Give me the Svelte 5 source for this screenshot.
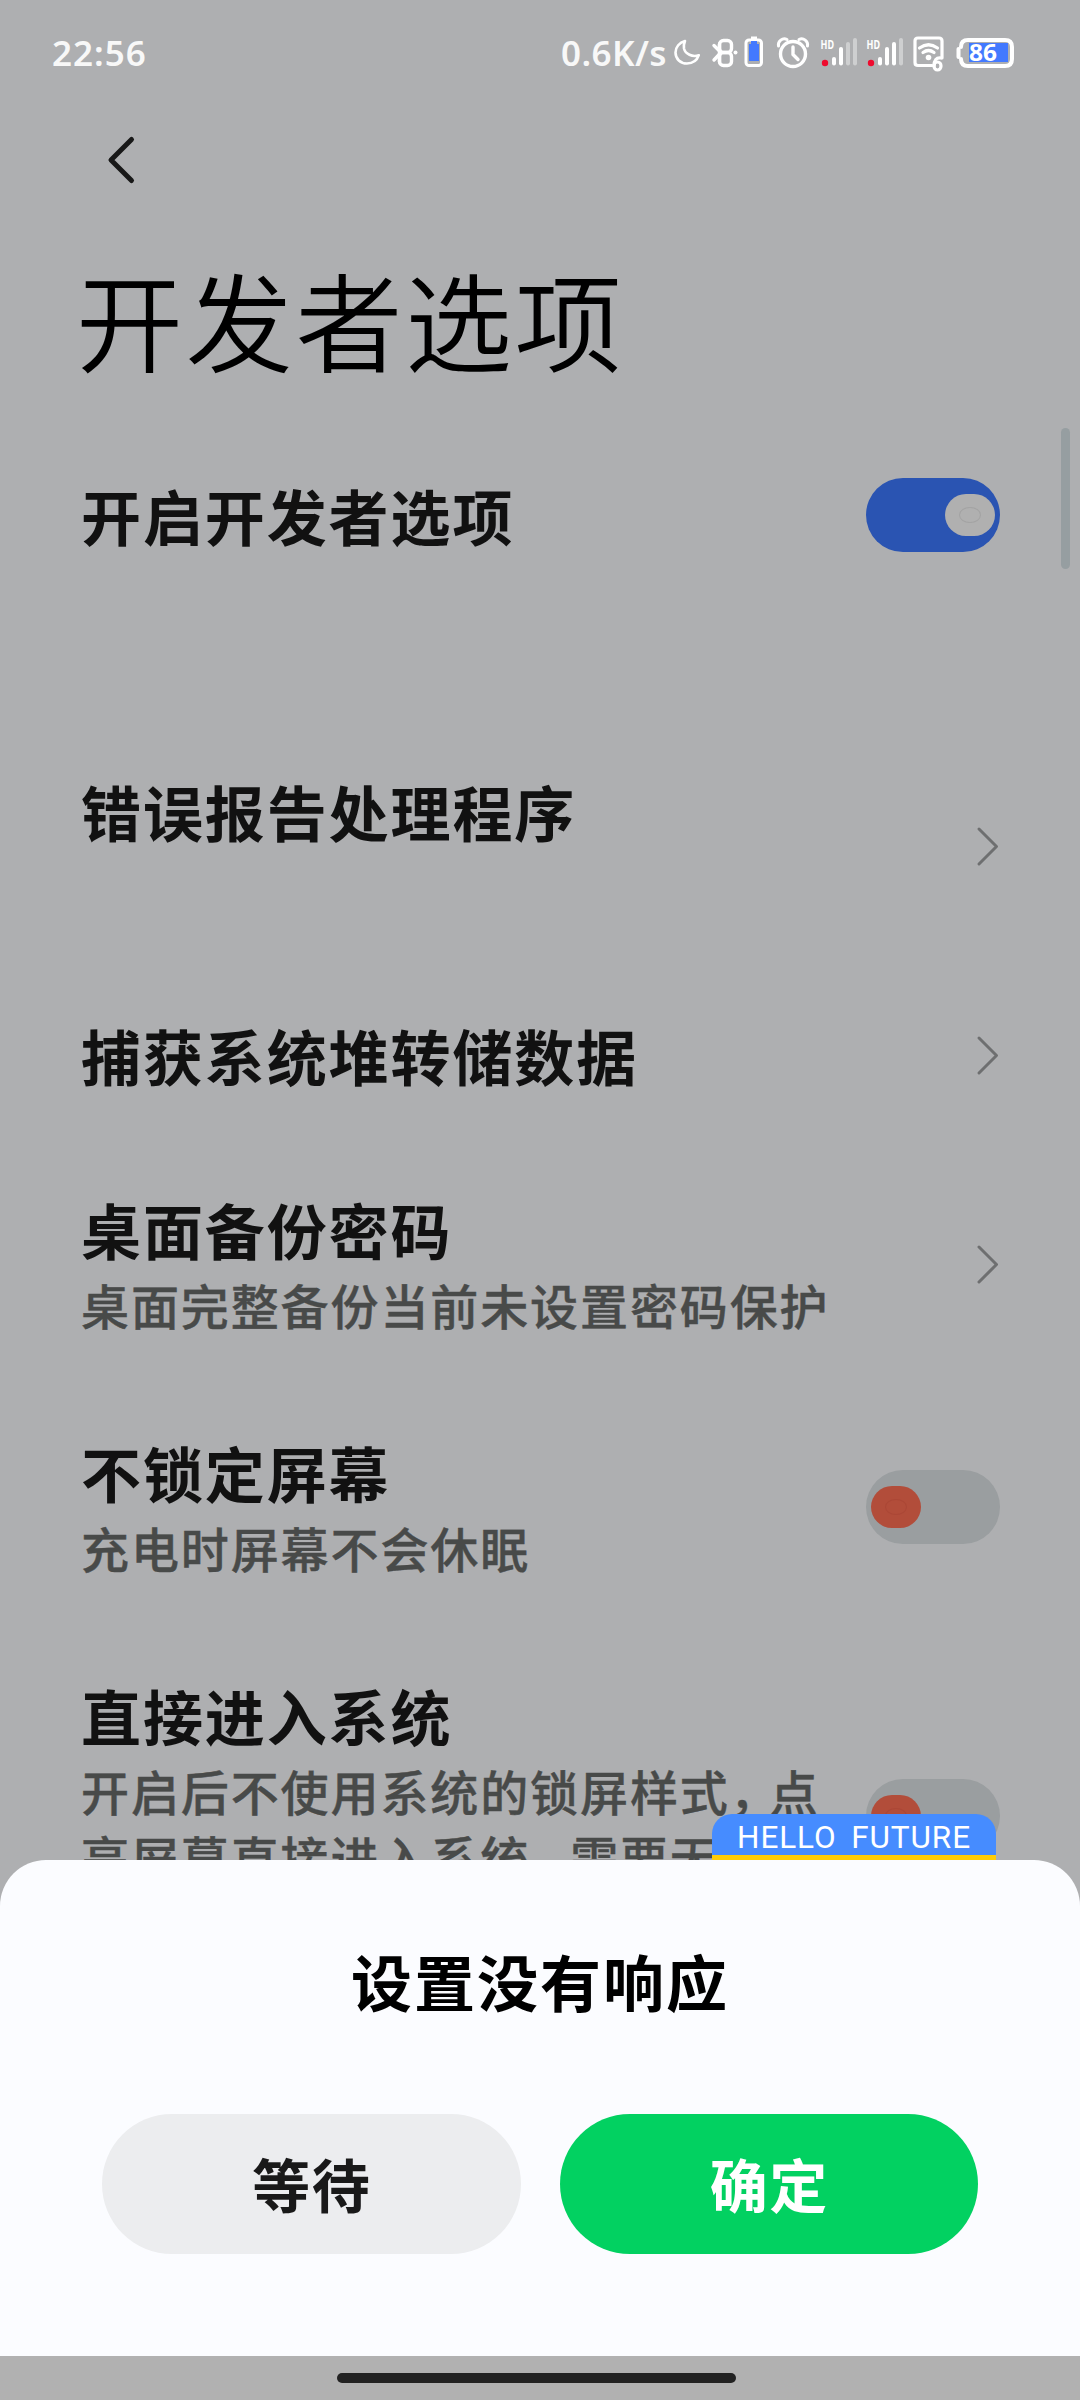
<script>
	let rows = [
		{ title: '开启开发者选项', kind: 'toggle', on: true, size: 'short', last: true },
		{ title: '错误报告处理程序', lines: [''], kind: 'link' },
		{ title: '捕获系统堆转储数据', kind: 'link', size: 'short' },
		{ title: '桌面备份密码', lines: ['桌面完整备份当前未设置密码保护'], kind: 'link' },
		{ title: '不锁定屏幕', lines: ['充电时屏幕不会休眠'], kind: 'toggle', on: false },
		{
			title: '直接进入系统',
			lines: ['开启后不使用系统的锁屏样式，点', '亮屏幕直接进入系统，需要无', ''],
			kind: 'toggle',
			on: false,
			size: 'tall'
		}
	];

	// opacity of the four bars, per sim
	const sims = [
		[1, 1, 0.4, 0.4],
		[1, 1, 1, 0.4]
	];
	const bars = [
		{ x: 12, y: 20 },
		{ x: 19, y: 10 },
		{ x: 26, y: 5 },
		{ x: 33, y: 1 }
	];

	function toggle(row) {
		row.on = !row.on;
		rows = rows;
	}
</script>

<div class="screen">
	<header class="status">
		<span class="clock">22:56</span>
		<div class="tray">
			<span class="speed">0.6K/s</span>
			<svg class="moon" width="28" height="28" viewBox="0 0 28 28">
				<path d="M11 2C5.500 3.500 1.500 8 1.500 13.500c0 6.500 5 11 11.500 11 5.500 0 10-3 11.800-8.300-6.500 2.300-13.500-1.200-14.800-6.700C9.400 6.500 10.200 4 11 2z" />
			</svg>
			<svg class="bt" width="26" height="32" viewBox="0 0 26 32">
				<path d="M2 7.500l7 7-7 7.500" />
				<rect x="7.500" y="2.500" width="12" height="12" rx="4" />
				<rect x="7.500" y="14.500" width="12" height="13" rx="4" />
				<path d="M7.500 6v18" />
				<circle class="solid" cx="23.500" cy="14.500" r="2" />
			</svg>
			<svg class="cell" width="20" height="32" viewBox="0 0 20 32">
				<rect x="2" y="4" width="15.500" height="25.500" rx="3" />
				<path class="solid" d="M7 .5h6v3H7z" />
				<path class="blue" d="M7 5h6v3h2v17H5V8h2z" />
			</svg>
			<svg class="alarm" width="34" height="32" viewBox="0 0 34 32">
				<path class="ear" d="M2.500 9a6 6 0 0 1 8.500-6.500M31.500 9a6 6 0 0 0-8.500-6.500" />
				<circle cx="17" cy="17" r="12.500" />
				<path d="M17 10v7.500l5 5" />
			</svg>
			{#each sims as sim}
				<svg class="sim" width="40" height="32" viewBox="0 0 40 32">
					<text x="0.500" y="11.500" textLength="13.500" lengthAdjust="spacingAndGlyphs">HD</text>
					<circle class="dot" cx="5" cy="26" r="3.200" />
					{#each bars as bar, i}
						<rect class="bar" x={bar.x} y={bar.y} width="4" height={28.5 - bar.y} rx="2" opacity={sim[i]} />
					{/each}
				</svg>
			{/each}
			<svg class="wifi" width="32" height="38" viewBox="0 0 32 38">
				<path d="M19 29.500H5q-3 0-3-3V5q0-3 3-3h21q3 0 3 3v17" />
				<path d="M6.500 12q9-6.500 18 0M10 16.500q5.500-4 11 0" />
				<circle class="solid" cx="15.500" cy="21.500" r="2.800" />
				<ellipse cx="24.500" cy="30" rx="3.500" ry="4" />
				<path d="M28 22q-7-1-7 8" />
			</svg>
			<svg class="battery" width="58" height="32" viewBox="0 0 58 32">
				<rect class="blue" x="13" y="6" width="39" height="19" />
				<path d="M5 10q0-7 7-7h37q7 0 7 7v12q0 7-7 7H12q-7 0-7-7" />
				<path d="M2.500 12v8" />
				<text x="13" y="24" textLength="28" lengthAdjust="spacingAndGlyphs">86</text>
			</svg>
		</div>
	</header>

	<nav class="bar-top">
		<svg width="30" height="50" viewBox="0 0 30 50">
			<path d="M26.500 4.500L6 25l20.500 20.500" />
		</svg>
	</nav>

	<h1>开发者选项</h1>

	<main>
		{#each rows as row}
			<div class="row {row.size || ''}" class:last={row.last}>
				<div class="text">
					<h2>{row.title}</h2>
					{#each row.lines || [] as line}
						<p>
							{#each line.split('，') as part, i}{#if i}<span class="comma">，</span>{/if}{part}{/each}
						</p>
					{/each}
				</div>
				{#if row.kind === 'toggle'}
					<button class="toggle" class:on={row.on} aria-label={row.title} on:click={() => toggle(row)}>
						<span class="knob"><span class="ring"></span></span>
					</button>
				{:else}
					<svg class="chevron" width="24" height="42" viewBox="0 0 24 42">
						<path d="M3 3l17.500 17.500L3 38" />
					</svg>
				{/if}
			</div>
		{/each}
	</main>

	<div class="scrollbar"></div>

	<div class="bottom">
		<section class="sheet">
			<div class="badge">HELLO FUTURE</div>
			<h3>设置没有响应</h3>
			<div class="actions">
				<button class="wait">等待</button>
				<button class="ok">确定</button>
			</div>
		</section>
		<footer><span></span></footer>
	</div>
</div>

<style>
	:global(body) {
		margin: 0;
		background: #aeafb1;
	}

	.screen {
		position: relative;
		width: 1080px;
		height: 2400px;
		overflow: hidden;
		background: #aeafb1;
		font-family: 'Noto Sans CJK SC', sans-serif;
	}

	h1, h2, h3, p {
		margin: 0;
		white-space: nowrap;
	}

	button {
		border: 0;
		padding: 0;
		font-family: inherit;
	}

	svg {
		display: block;
		flex: none;
		overflow: visible;
		fill: none;
		stroke: #fff;
		stroke-linecap: round;
		stroke-linejoin: round;
	}

	/* status bar */
	.status {
		display: flex;
		justify-content: space-between;
		box-sizing: border-box;
		height: 104px;
		padding: 36px 66px 0 52px;
		color: #f8f8f8;
		font-family: 'Noto Sans', sans-serif;
		font-size: 35px;
		font-weight: 600;
		line-height: 34px;
	}

	.clock {
		letter-spacing: 1px;
	}

	.tray {
		display: flex;
		align-items: flex-start;
	}

	.speed {
		margin-right: 7px;
		letter-spacing: 0.4px;
	}

	.moon {
		margin: 3px 10px 0 0;
		stroke-width: 2.6;
	}

	.bt {
		margin: 2px 6px 0 0;
		stroke-width: 3.4;
	}

	.cell {
		margin-right: 12px;
		stroke-width: 3;
	}

	.alarm {
		margin: 1px 10px 0 0;
		stroke-width: 3.4;
	}

	.sim {
		margin: 1px 6px 0 0;
	}

	.wifi {
		margin: 0 11px 0 1px;
		stroke-width: 3.2;
	}

	.battery {
		margin-top: 1px;
		stroke-width: 4;
	}

	.ear {
		stroke-width: 3;
	}

	.solid, .bar {
		fill: #fff;
		stroke: none;
	}

	.blue {
		fill: #4379ff;
		stroke: none;
	}

	.dot {
		fill: #ee0a2e;
		stroke: none;
	}

	.status text {
		fill: #fff;
		stroke: none;
		font-size: 13px;
		font-weight: 700;
	}

	.status .battery text {
		font-size: 24px;
	}

	.bar-top {
		display: flex;
		align-items: center;
		height: 112px;
		padding-left: 105px;
	}

	.bar-top svg {
		stroke: #181818;
		stroke-width: 5;
	}

	h1 {
		height: 211px;
		padding-left: 76px;
		color: #000;
		font-size: 107px;
		font-weight: 350;
		letter-spacing: 2.7px;
		line-height: 204px;
		box-sizing: border-box;
	}

	/* settings list */
	.row {
		display: flex;
		align-items: center;
		justify-content: space-between;
		height: 243px;
		padding: 0 80px 0 81px;
	}

	.row.short {
		height: 175px;
	}

	.row.tall {
		height: 375px;
	}

	.row.last {
		margin-bottom: 123px;
	}

	.text {
		padding-bottom: 7px;
	}

	.short .text {
		padding-bottom: 4px;
	}

	.last .text {
		padding: 0 0 2px;
	}

	h2 {
		color: #111;
		font-size: 60px;
		font-weight: 700;
		letter-spacing: 1.9px;
		line-height: 88px;
		margin-bottom: -2px;
	}

	p {
		height: 66px;
		color: #484a49;
		font-size: 48px;
		font-weight: 500;
		letter-spacing: 1.9px;
		line-height: 66px;
		-webkit-text-stroke: 0.4px #484a49;
	}

	.comma {
		letter-spacing: -8px;
	}

	.chevron {
		stroke: #6e6f70;
		stroke-width: 3;
	}

	.toggle {
		display: flex;
		align-items: center;
		box-sizing: border-box;
		width: 134px;
		height: 74px;
		padding: 0 5px;
		margin-bottom: 1px;
		border-radius: 37px;
		background: #9a9ea0;
	}

	.toggle.on {
		justify-content: flex-end;
		margin: 1px 0 0;
		background: #2a54b2;
	}

	.knob {
		display: flex;
		align-items: center;
		justify-content: center;
		width: 50px;
		height: 42px;
		border-radius: 21px;
		background: #b24d3a;
	}

	.on .knob {
		background: #b0b0b0;
	}

	.ring {
		box-sizing: border-box;
		width: 22px;
		height: 16px;
		border: 1px solid #ab4736;
		border-radius: 50%;
	}

	.on .ring {
		border-color: #a3a3a3;
	}

	.scrollbar {
		position: absolute;
		top: 428px;
		right: 10px;
		width: 9px;
		height: 141px;
		border-radius: 5px;
		background: #969ea1;
	}

	/* dialog over the list */
	.bottom {
		position: absolute;
		left: 0;
		right: 0;
		bottom: 0;
	}

	.sheet {
		position: relative;
		box-sizing: border-box;
		height: 496px;
		padding: 76px 102px 0;
		border-radius: 46px 46px 0 0;
		background: #fbfcff;
	}

	.badge {
		position: absolute;
		top: -46px;
		right: 84px;
		box-sizing: border-box;
		width: 284px;
		height: 46px;
		border-bottom: 5px solid #ffcc06;
		border-radius: 20px 20px 0 0;
		background: #468cff;
		color: #fff;
		font-family: Roboto, sans-serif;
		font-size: 31.5px;
		line-height: 47px;
		letter-spacing: 0.9px;
		word-spacing: 6px;
		text-align: center;
		white-space: nowrap;
	}

	h3 {
		color: #000;
		font-size: 61px;
		font-weight: 700;
		letter-spacing: 2px;
		line-height: 90px;
		text-align: center;
	}

	.actions {
		display: flex;
		justify-content: space-between;
		margin-top: 88px;
	}

	.actions button {
		width: 418.5px;
		height: 140px;
		border-radius: 70px;
		font-size: 58px;
		font-weight: 700;
		letter-spacing: 1.5px;
		line-height: 136px;
		padding: 0 0 3px 1px;
	}

	.wait {
		background: #ecedef;
		color: #191919;
	}

	.ok {
		background: #02d161;
		color: #fff;
	}

	footer {
		display: flex;
		justify-content: center;
		height: 44px;
		background: #b1b1b1;
	}

	footer span {
		width: 399px;
		height: 10px;
		margin: 17px 7px 0 0;
		border-radius: 5px;
		background: #222;
	}
</style>
